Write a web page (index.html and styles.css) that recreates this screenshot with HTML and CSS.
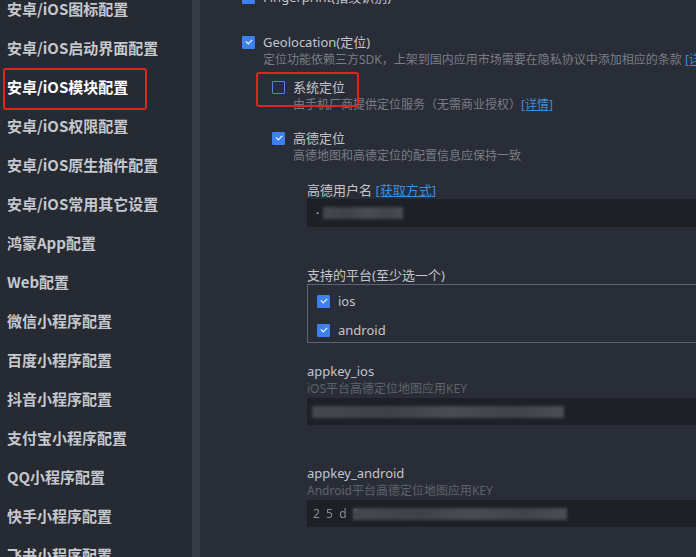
FILE: index.html
```html
<!DOCTYPE html>
<html lang="zh-CN">
<head>
<meta charset="utf-8">
<title>manifest.json</title>
<link rel="stylesheet" href="styles.css">
</head>
<body>
<div class="app">
  <nav class="sidebar">
    <ul class="menu">
      <li class="menu-item">安卓/iOS图标配置</li>
      <li class="menu-item">安卓/iOS启动界面配置</li>
      <li class="menu-item active"><span class="mark">安卓/iOS模块配置</span></li>
      <li class="menu-item">安卓/iOS权限配置</li>
      <li class="menu-item">安卓/iOS原生插件配置</li>
      <li class="menu-item">安卓/iOS常用其它设置</li>
      <li class="menu-item">鸿蒙App配置</li>
      <li class="menu-item">Web配置</li>
      <li class="menu-item">微信小程序配置</li>
      <li class="menu-item">百度小程序配置</li>
      <li class="menu-item">抖音小程序配置</li>
      <li class="menu-item">支付宝小程序配置</li>
      <li class="menu-item">QQ小程序配置</li>
      <li class="menu-item">快手小程序配置</li>
      <li class="menu-item">飞书小程序配置</li>
    </ul>
  </nav>
  <div class="gutter"></div>
  <main class="content">
    <div class="scroll">
      <div class="option">
        <span class="check on"></span>
        <span class="label">Fingerprint(指纹识别)</span>
      </div>

      <section class="block geo">
        <div class="option">
          <span class="check on"></span>
          <span class="label">Geolocation(定位)</span>
        </div>
        <p class="desc">定位功能依赖三方SDK，上架到国内应用市场需要在隐私协议中添加相应的条款 <a class="link">[详情]</a></p>

        <div class="sub">
          <div class="option marked">
            <span class="check"></span>
            <span class="label">系统定位</span>
          </div>
          <p class="desc">由手机厂商提供定位服务（无需商业授权）<a class="link">[详情]</a></p>

          <div class="option amap">
            <span class="check on"></span>
            <span class="label">高德定位</span>
          </div>
          <p class="desc">高德地图和高德定位的配置信息应保持一致</p>

          <div class="fields">
            <div class="field">
              <div class="field-label">高德用户名 <a class="link">[获取方式]</a></div>
              <div class="input"><span class="caret">·</span><span class="redact w80"></span></div>
            </div>

            <div class="field platforms">
              <div class="field-label">支持的平台(至少选一个)</div>
              <div class="platform-box">
                <div class="option">
                  <span class="check on"></span>
                  <span class="label">ios</span>
                </div>
                <div class="option">
                  <span class="check on"></span>
                  <span class="label">android</span>
                </div>
              </div>
            </div>

            <div class="field key-ios">
              <div class="field-label">appkey_ios</div>
              <p class="field-desc">iOS平台高德定位地图应用KEY</p>
              <div class="input short"><span class="redact w252"></span></div>
            </div>

            <div class="field key-android">
              <div class="field-label">appkey_android</div>
              <p class="field-desc">Android平台高德定位地图应用KEY</p>
              <div class="input short"><span class="partial">2  5  d  5</span><span class="redact w210"></span></div>
            </div>
          </div>
        </div>
      </section>
    </div>
  </main>
</div>
</body>
</html>
```

FILE: styles.css
```css
* { box-sizing: border-box; }
html, body {
  margin: 0;
  padding: 0;
  width: 696px;
  height: 557px;
  overflow: hidden;
  background: #292d37;
}
body {
  font-family: "Noto Sans", "Noto Sans CJK SC", sans-serif;
}
p { margin: 0; }
ul { margin: 0; padding: 0; list-style: none; }

.app {
  display: flex;
  height: 557px;
  overflow: hidden;
}

/* sidebar */
.sidebar {
  width: 192px;
  flex: none;
  background: #262a33;
  overflow: hidden;
}
.menu {
  margin-top: -11px;
}
.menu-item {
  height: 39px;
  line-height: 39px;
  padding-left: 7px;
  font-family: "Noto Sans CJK SC", sans-serif;
  font-weight: 700;
  font-size: 15px;
  color: #c4c7cd;
  white-space: nowrap;
}
.menu-item.active { color: #ffffff; }
.mark { position: relative; display: inline-block; }
.mark::after {
  content: "";
  position: absolute;
  left: -4px;
  top: 1px;
  width: 140px;
  height: 38px;
  border: 2px solid #e3241e;
  border-radius: 3px;
}

.gutter {
  width: 8px;
  flex: none;
  background: #363a45;
}

/* content */
.content {
  flex: 1;
  overflow: hidden;
  padding-left: 42px;
}
.scroll { margin-top: -12px; }

.option {
  display: flex;
  align-items: center;
  gap: 8px;
  height: 18px;
  font-size: 13px;
  color: #c3c5ca;
  white-space: nowrap;
}
.label { line-height: 18px; }

.check {
  width: 13px;
  height: 13px;
  flex: none;
  border: 1px solid #4d82e6;
  border-radius: 1px;
  position: relative;
}
.check.on {
  background: #3f80ef;
  border-color: #3f80ef;
}
.check.on::after {
  content: "";
  position: absolute;
  left: 3px;
  top: 2px;
  width: 5px;
  height: 3px;
  border-left: 1.5px solid #ffffff;
  border-bottom: 1.5px solid #ffffff;
  transform: rotate(-45deg);
}

.desc {
  padding-left: 21px;
  font-size: 12px;
  line-height: 18px;
  color: #7a7d85;
  white-space: nowrap;
}
.link {
  color: #3d8fdc;
  text-decoration: underline;
}

.geo { margin-top: 27px; }

.sub {
  margin-left: 30px;
  margin-top: 9px;
}
.marked { position: relative; }
.marked::after {
  content: "";
  position: absolute;
  left: -16px;
  top: -6px;
  width: 99px;
  height: 31px;
  border: 2px solid #e3241e;
  border-radius: 3px;
}
.amap { margin-top: 15px; }

.fields {
  margin-left: 35px;
  margin-top: 16px;
}
.field-label {
  font-size: 13px;
  line-height: 18px;
  color: #c3c5ca;
  white-space: nowrap;
}
.field-desc {
  font-size: 12px;
  line-height: 18px;
  color: #5f636b;
  white-space: nowrap;
}
.input {
  width: 420px;
  height: 28px;
  background: #1e2026;
  display: flex;
  align-items: center;
  padding-left: 6px;
  color: #c3c5ca;
  font-size: 12px;
}
.input.short { height: 27px; }
.caret { width: 10px; padding-left: 3px; }
.redact {
  height: 12px;
  background: linear-gradient(90deg, #45484f 0%, #3e4148 30%, #4a4c53 55%, #404349 80%, #4a4d53 100%);
  filter: blur(1.5px);
}
.w80 { width: 80px; }
.w252 { width: 252px; margin-left: -1px; }
.w210 { width: 214px; }
.partial {
  color: #8a8d93;
  filter: blur(0.6px);
  white-space: pre;
  width: 40px;
}

.platforms { margin-top: 39px; }
.platform-box {
  width: 420px;
  height: 59px;
  border: 1px solid #5f6377;
  padding: 7px 0 0 9px;
  display: flex;
  flex-direction: column;
  gap: 11px;
}

.key-ios { margin-top: 19px; }
.key-android { margin-top: 39px; }
```
